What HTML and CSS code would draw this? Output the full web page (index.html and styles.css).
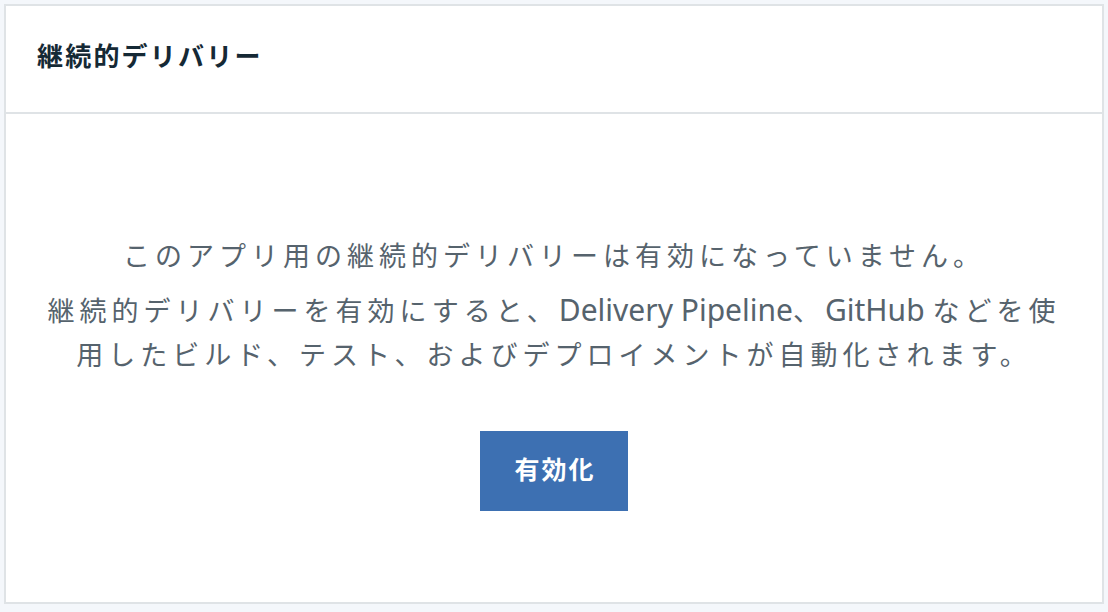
FILE: index.html
```html
<!DOCTYPE html>
<html lang="ja">
<head>
<meta charset="utf-8">
<title>継続的デリバリー</title>
<link rel="stylesheet" href="styles.css">
</head>
<body>
<section class="card">
  <header class="card-header">
    <h2 class="card-title">継続的デリバリー</h2>
  </header>
  <div class="card-body">
    <p class="lead">このアプリ用の継続的デリバリーは有効になっていません。</p>
    <p class="desc">継続的デリバリーを有効にすると、<span class="latin">Delivery Pipeline</span>、<span class="latin">GitHub </span>などを使<br>用したビルド、テスト、およびデプロイメントが自動化されます。</p>
    <button class="btn-primary" type="button">有効化</button>
  </div>
</section>
</body>
</html>
```
FILE: styles.css
```css
html, body {
  margin: 0;
  padding: 0;
}
body {
  background: #f4f7fb;
  font-family: "Noto Sans CJK JP", "Noto Sans", sans-serif;
  width: 1108px;
  height: 612px;
  overflow: hidden;
}
.card {
  margin: 4px;
  width: 1100px;
  height: 600px;
  box-sizing: border-box;
  border: 2px solid #dfe3e6;
  background: #ffffff;
  display: flex;
  flex-direction: column;
}
.card-header {
  height: 108px;
  box-sizing: border-box;
  border-bottom: 2px solid #dfe3e6;
  display: flex;
  align-items: center;
  padding: 0 0 8px 31px;
  flex-shrink: 0;
}
.card-title {
  margin: 0;
  font-size: 26px;
  font-weight: 700;
  letter-spacing: 2.2px;
  color: #152935;
  line-height: 1;
}
.card-body {
  flex: 1;
  display: flex;
  flex-direction: column;
  align-items: center;
  padding-top: 119px;
  color: #56636d;
  text-align: center;
}
.lead, .desc {
  margin: 0;
  font-size: 27px;
  line-height: 44px;
  letter-spacing: 5px;
}
.desc {
  margin-top: 11px;
}
.latin {
  font-family: "Noto Sans", sans-serif;
  font-size: 30px;
  line-height: 1;
  letter-spacing: 0;
}
.btn-primary {
  margin-top: 55px;
  width: 148px;
  height: 80px;
  border: 0;
  background: #3d70b2;
  color: #ffffff;
  font-family: "Noto Sans CJK JP", sans-serif;
  font-size: 25px;
  font-weight: 700;
  letter-spacing: 2px;
  padding: 0 0 6px 2px;
  cursor: pointer;
}
```
